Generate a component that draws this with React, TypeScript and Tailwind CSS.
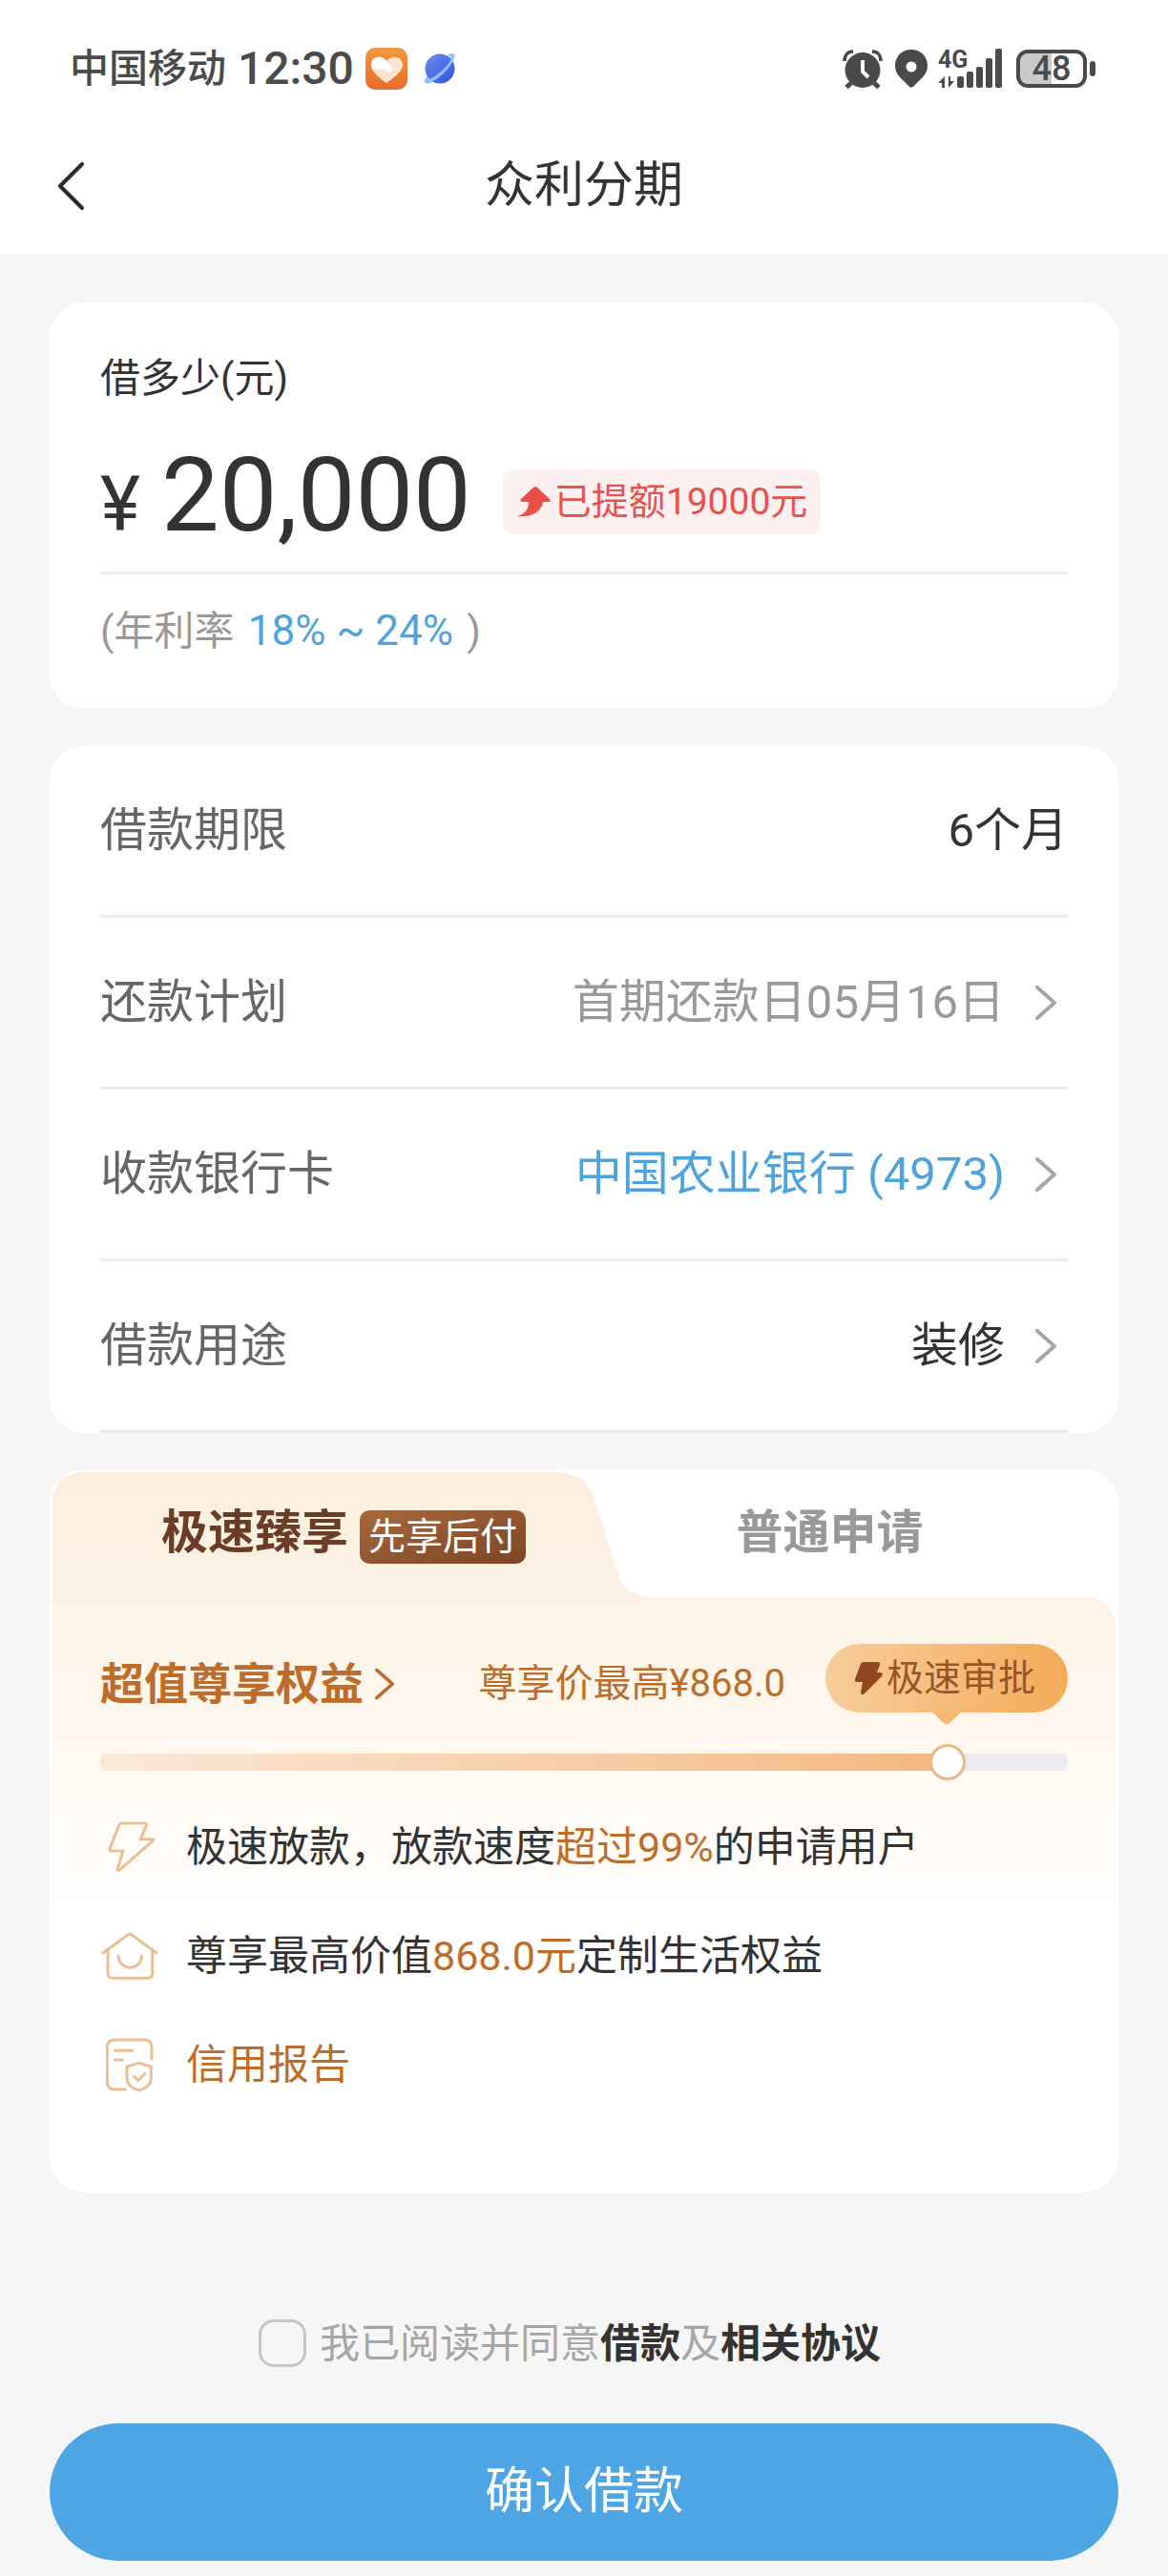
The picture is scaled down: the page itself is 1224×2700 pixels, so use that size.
import { useState } from 'react'
import type { ReactNode } from 'react'
import clsx from 'clsx'

interface LoanRow {
  label: string
  value: string
  tone: string
  link: boolean
}

const loanRows: LoanRow[] = [
  { label: '借款期限', value: '6个月', tone: 'text-[#333333]', link: false },
  { label: '还款计划', value: '首期还款日05月16日', tone: 'text-[#999999]', link: true },
  { label: '收款银行卡', value: '中国农业银行 (4973)', tone: 'text-[#4fa3dc]', link: true },
  { label: '借款用途', value: '装修', tone: 'text-[#333333]', link: true },
]

function Chevron({ className }: { className?: string }) {
  return (
    <svg viewBox="0 0 22 36" fill="none" stroke="currentColor" className={clsx('shrink-0', className)} aria-hidden="true">
      <path d="M2 2 20 18 2 34" strokeWidth="4" strokeLinecap="round" strokeLinejoin="round" />
    </svg>
  )
}

function StatusBar() {
  return (
    <div className="flex h-[144px] items-center justify-between pr-[76px] pl-[73px] text-[#4a4a4a]">
      <div className="flex items-center">
        <span className="text-[41px] leading-[60px] font-medium">中国移动</span>
        <span className="ml-3 text-[48px] leading-[60px] font-medium">12:30</span>
        <svg viewBox="0 0 44 44" className="ml-3 h-11 w-11" aria-hidden="true">
          <defs>
            <linearGradient id="heartBg" x1="0" y1="0" x2="0" y2="1">
              <stop offset="0" stopColor="#f29a3c" />
              <stop offset="1" stopColor="#e96a2c" />
            </linearGradient>
          </defs>
          <rect width="44" height="44" rx="10" fill="url(#heartBg)" />
          <path d="M22 37C18 34 6 26 6 18c0-9 11-11 16-4 5-7 17-5 17 4 0 8-13 16-17 19Z" fill="#fbe3cf" />
          <path d="M6 18c0-9 11-11 16-4l5 6c2 4-2 7-5 5l-5-3c-4 0-8 1-9 2-1-2-2-4-2-6Z" fill="#fff" />
        </svg>
        <svg viewBox="0 0 34 34" className="ml-[17px] h-[34px] w-[34px]" aria-hidden="true">
          <defs>
            <linearGradient id="planetBg" x1="0" y1="0" x2="1" y2="1">
              <stop offset="0" stopColor="#6a8cf0" />
              <stop offset="1" stopColor="#2f55d8" />
            </linearGradient>
          </defs>
          <circle cx="17" cy="17" r="15.500" fill="url(#planetBg)" />
          <path d="M24 3C29 0 34 0 32 6 29 15 16 28 6 32 0 34-1 30 4 24c0 4 2 4 6 2C18 21 26 13 28 8c1-4-1-5-4-5Z" fill="#8fc0fb" />
        </svg>
      </div>
      <div className="flex items-center">
        <svg viewBox="0 0 42 42" className="h-[42px] w-[42px]" aria-hidden="true">
          <circle cx="21" cy="22.500" r="18.500" fill="currentColor" />
          <path d="M9 36 4 40.500M33 36l5 4.500" stroke="currentColor" strokeWidth="5" />
          <path d="M2 13C2 6 6 3 11 3M40 13c0-7-4-10-9-10" fill="none" stroke="currentColor" strokeWidth="3.500" />
          <path d="M21 12v12l6 6" fill="none" stroke="#fff" strokeWidth="4" />
        </svg>
        <svg viewBox="0 0 36 42" className="ml-3 h-[42px] w-9" aria-hidden="true">
          <path d="M18 1C8 1 1 8 1 18c0 10 9 15 14 21 2 2 4 2 6 0 5-6 14-11 14-21C35 8 28 1 18 1Z" fill="currentColor" />
          <circle cx="18" cy="19" r="5.500" fill="#fff" />
        </svg>
        <svg viewBox="0 0 68 42" className="ml-[10px] h-[42px] w-[68px] overflow-visible" fill="currentColor" role="img" aria-label="4G">
          <text x="0" y="20" fontSize="25" fontWeight="700" fontFamily="Roboto, sans-serif">4G</text>
          <path d="M0 36 7 29v12H4v-5ZM17 34l-6 7V29h2v5Z" />
          <rect x="20" y="29" width="7" height="12" rx="2" />
          <rect x="30" y="24" width="7" height="17" rx="2" />
          <rect x="40" y="19" width="7" height="22" rx="2" />
          <rect x="50" y="10" width="7" height="31" rx="2" />
          <rect x="60" y="0" width="7" height="41" rx="2" />
        </svg>
        <div className="ml-[14px] flex h-10 w-[74px] items-center justify-center rounded-xl border-4 border-current bg-linear-to-r from-[#c9c9c9] from-50% to-white to-50%">
          <span className="text-[36px] leading-9 font-medium">48</span>
        </div>
        <span className="ml-[3px] h-4 w-[6px] rounded-[3px] bg-current" />
      </div>
    </div>
  )
}

function BoltIcon() {
  return (
    <path d="M67 15H140q8 0 5 7L127 65H163q9 0 2 6L62 161q-9 6-7-4L72 102H35q-8 0-5-7L60 20q3-5 7-5Z" />
  )
}

function HouseIcon() {
  return (
    <>
      <path d="M9 81 87 24q6-5 12 0L177 81" />
      <path d="M24 76V145q0 15 15 15H149q15 0 15-15V76" />
      <path d="M57 90a36 36 0 0 0 73 0" />
    </>
  )
}

function ReportIcon() {
  return (
    <>
      <path d="M162 72V36Q162 12 138 12H46Q22 12 22 36V144Q22 168 46 168H79" />
      <path d="M46 46H101M46 75H70" />
      <path d="M122 85 160 96V132q0 28-38 39q-38-11-38-39V96Z" />
      <path d="m107 128 13 12 20-22" />
    </>
  )
}

function Benefit({ icon, children }: { icon: ReactNode; children: ReactNode }) {
  return (
    <li className="flex h-[60px] items-center">
      <svg
        viewBox="0 0 180 180"
        fill="none"
        stroke="#e9bf98"
        strokeWidth="9"
        strokeLinecap="round"
        strokeLinejoin="round"
        className="h-[60px] w-[60px] shrink-0"
        aria-hidden="true"
      >
        {icon}
      </svg>
      <p className="ml-[30px] text-[43px] leading-[60px]">{children}</p>
    </li>
  )
}

function AmountCard() {
  return (
    <section className="mt-[51px] rounded-[36px] bg-white px-[53px] pt-[50px] pb-[54px]">
      <h2 className="text-[42px] leading-[60px]">借多少(元)</h2>
      <div className="mt-[38px] flex items-end border-b-[3px] border-[#ebebeb] pb-[26px]">
        <p className="flex items-baseline text-[108px] leading-[108px]">
          <span className="mr-[22px] text-[80px] leading-[80px]">¥</span>
          20,000
        </p>
        <div className="mb-[13px] ml-[33px] flex h-[68px] items-center rounded-[10px] bg-[#fdf0f0] px-[14px] text-[39px] text-[#e5534f]">
          <svg viewBox="0 0 36 32" className="h-8 w-9" aria-hidden="true">
            <path d="M18 1q2-2 4 0L35 13q2 3-1 3H28C27 25 17 33 1 31 9 29 13 24 13 16H7q-4 0-2-3Z" fill="#ea4f47" />
          </svg>
          <span className="ml-1">已提额19000元</span>
        </div>
      </div>
      <p className="mt-8 text-[42px] leading-[54px] text-[#999999]">
        (年利率 <span className="mx-1 text-[44px] text-[#4fa3dc]">18% ~ 24%</span> )
      </p>
    </section>
  )
}

function MemberCard() {
  const [speed, setSpeed] = useState(89)

  return (
    <section className="relative mt-[38px] rounded-[36px] bg-white pb-[104px]">
      {/* tab-shaped backdrop */}
      <svg
        viewBox="0 0 1120 480"
        preserveAspectRatio="none"
        className="absolute inset-x-0 top-0 h-[480px] w-full"
        aria-hidden="true"
      >
        <defs>
          <linearGradient id="peach" x1="0" y1="0" x2="0" y2="1">
            <stop offset="0" stopColor="#fcefde" />
            <stop offset="0.35" stopColor="#fcf4e8" />
            <stop offset="0.700" stopColor="#fffaf4" />
            <stop offset="1" stopColor="#ffffff" />
          </linearGradient>
        </defs>
        <path
          d="M3 480V37Q3 3 37 3H532C552 3 566 14 571 30L595 109C601 125 612 134 634 134H1085Q1117 134 1117 168V480Z"
          fill="url(#peach)"
        />
      </svg>

      <div className="relative">
        <div role="tablist" className="flex h-[130px] pt-1">
          <button role="tab" aria-selected="true" className="flex w-[55%] items-center justify-center text-[#6b3c26]">
            <span className="text-[49px] leading-[60px] font-bold">极速臻享</span>
            <span className="mt-2 ml-3 rounded-[10px] bg-linear-to-br from-[#a8693b] to-[#7d4427] px-[9px] text-[39px] leading-[56px] text-white">
              先享后付
            </span>
          </button>
          <button role="tab" aria-selected="false" className="w-[36%] text-[49px] font-bold text-[#999999]">
            普通申请
          </button>
        </div>

        <div className="px-[53px] pt-[53px]">
          <div className="flex items-end justify-between text-[#bd6d2b]">
            <a href="#benefits" className="flex items-center text-[46px] leading-[60px] font-bold">
              超值尊享权益
              <Chevron className="ml-3 h-[34px] w-5" />
            </a>
            <div className="flex items-end">
              <p className="text-[40px] leading-[60px]">尊享价最高¥868.0</p>
              <div className="relative ml-[42px] flex h-[72px] items-center rounded-full bg-linear-to-r from-[#f7cd9b] to-[#f3ab57] pr-[34px] pl-[30px] text-[39px] text-[#96562a]">
                <svg viewBox="0 0 30 36" className="h-9 w-[30px]" aria-hidden="true">
                  <path d="M10 1H25q3 0 2 3L24 12h4q3 1 1 4L10 35q-3 1-3-2L9 22H3q-3 0-2-3L7 3q1-2 3-2Z" fill="#8f481f" />
                </svg>
                <span className="ml-1">极速审批</span>
                <svg viewBox="0 0 32 14" className="absolute top-[71px] left-[111px] h-[14px] w-8" aria-hidden="true">
                  <path d="M0 0H32L19 12q-3 3-6 0Z" fill="#f5b972" />
                </svg>
              </div>
            </div>
          </div>

          <div className="relative mt-[33px] flex h-[38px] items-center">
            <div className="h-[18px] w-full overflow-hidden rounded-lg bg-[#ebebf0]">
              <div
                className="h-full bg-linear-to-r from-[#fbe9d8] to-[#f2b67d]"
                style={{ width: `${speed}%` }}
              />
            </div>
            <input
              type="range"
              aria-label="审批速度"
              value={speed}
              onChange={(e) => setSpeed(Number(e.target.value))}
              className="absolute inset-0 w-full appearance-none bg-transparent [&::-webkit-slider-thumb]:h-[38px] [&::-webkit-slider-thumb]:w-[38px] [&::-webkit-slider-thumb]:appearance-none [&::-webkit-slider-thumb]:rounded-full [&::-webkit-slider-thumb]:border-[3px] [&::-webkit-slider-thumb]:border-solid [&::-webkit-slider-thumb]:border-[#e9b885] [&::-webkit-slider-thumb]:bg-white"
            />
          </div>

          <ul className="mt-10 space-y-[54px]">
            <Benefit icon={<BoltIcon />}>
              极速放款，放款速度<span className="text-[#bd6d2b]">超过99%</span>的申请用户
            </Benefit>
            <Benefit icon={<HouseIcon />}>
              尊享最高价值<span className="text-[#bd6d2b]">868.0元</span>定制生活权益
            </Benefit>
            <Benefit icon={<ReportIcon />}>
              <a href="#report" className="text-[#bd6d2b]">信用报告</a>
            </Benefit>
          </ul>
        </div>
      </div>
    </section>
  )
}

export default function App() {
  const [agreed, setAgreed] = useState(false)

  return (
    <div lang="zh-CN" className="min-h-screen bg-[#f6f6f6] font-[Roboto,'Noto_Sans_CJK_SC',sans-serif] text-[#333333]">
      <header className="bg-white pb-5">
        <StatusBar />
        <div className="relative flex h-[102px] items-center justify-center">
          <button aria-label="返回" className="absolute left-[59px]">
            <svg viewBox="0 0 30 52" fill="none" className="h-[52px] w-[30px]" aria-hidden="true">
              <path d="M27 3 4 26 27 49" stroke="#2b2b2b" strokeWidth="4.200" strokeLinecap="round" strokeLinejoin="round" />
            </svg>
          </button>
          <h1 className="text-[52px] leading-[72px]">众利分期</h1>
        </div>
      </header>

      <main className="px-[52px] pb-3">
        <AmountCard />

        <section className="mt-[39px] rounded-[36px] bg-white px-[53px] text-[49px]">
          {loanRows.map((row) => (
            <div key={row.label} className="flex h-[180px] items-center justify-between border-b-[3px] border-[#ebebeb]">
              <span className="text-[#666666]">{row.label}</span>
              {row.link ? (
                <button className={clsx('flex items-center', row.tone)}>
                  {row.value}
                  <Chevron className="mr-3 ml-8 h-9 w-[22px] text-[#a6a6a6]" />
                </button>
              ) : (
                <span className={row.tone}>{row.value}</span>
              )}
            </div>
          ))}
        </section>

        <MemberCard />

        <div className="mt-[133px] flex h-[50px] items-center justify-center pr-[30px] text-[42px] text-[#a6a6a6]">
          <input
            id="agree"
            type="checkbox"
            checked={agreed}
            onChange={(e) => setAgreed(e.target.checked)}
            className="mr-[14px] h-[50px] w-[50px] appearance-none rounded-2xl border-[3px] border-[#c6c6c6] checked:bg-[#4da5e4]"
          />
          <label htmlFor="agree">我已阅读并同意</label>
          <a href="#loan" className="font-bold text-[#333333]">借款</a>
          及
          <a href="#terms" className="font-bold text-[#333333]">相关协议</a>
        </div>

        <button className="mt-[59px] h-[144px] w-full rounded-full bg-[#4da5e4] text-[52px] text-white">确认借款</button>
      </main>
    </div>
  )
}
